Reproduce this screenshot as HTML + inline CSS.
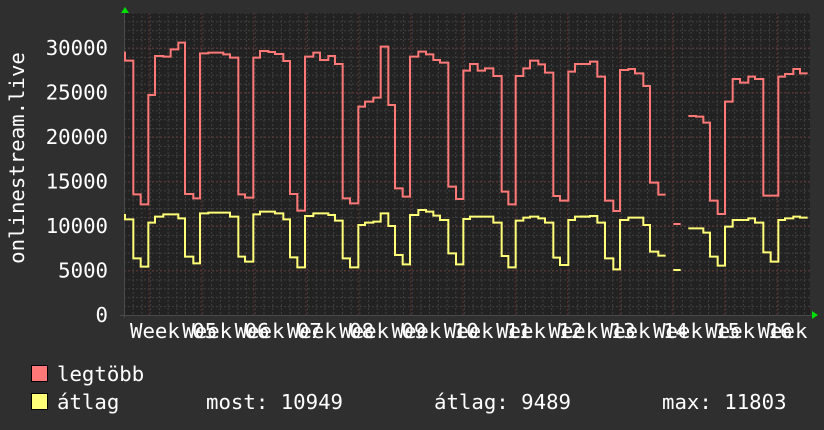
<!DOCTYPE html>
<html><head><meta charset="utf-8"><style>
html,body{margin:0;padding:0;background:#2f2f2f;}
svg{display:block;}
text{font-family:"DejaVu Sans Mono","Liberation Mono",monospace;fill:#fff;font-size:20.7px;}
</style></head><body>
<svg width="824" height="430" viewBox="0 0 824 430" xmlns="http://www.w3.org/2000/svg">
<rect width="824" height="430" fill="#2f2f2f"/>
<rect x="124" y="13" width="686" height="302" fill="#222222"/>
<defs>
<pattern id="vmin" x="124" y="0" width="8.717" height="430" patternUnits="userSpaceOnUse">
<line x1="0.5" y1="0" x2="0.5" y2="430" stroke="#404040" stroke-width="1" stroke-dasharray="2,2"/>
</pattern>
<pattern id="hmin" x="0" y="315" width="824" height="8.9" patternUnits="userSpaceOnUse">
<line x1="0" y1="0.5" x2="824" y2="0.5" stroke="#404040" stroke-width="1" stroke-dasharray="2,2"/>
</pattern>
</defs>
<rect x="124" y="13" width="686" height="302" fill="url(#vmin)"/>
<rect x="124" y="13" width="686" height="302" fill="url(#hmin)"/>
<g stroke="#5e3030" stroke-width="1" stroke-dasharray="2,2">
<line x1="149" y1="13" x2="149" y2="315"/><line x1="201.3" y1="13" x2="201.3" y2="315"/>
<line x1="253.7" y1="13" x2="253.7" y2="315"/><line x1="306" y1="13" x2="306" y2="315"/>
<line x1="358.3" y1="13" x2="358.3" y2="315"/><line x1="410.7" y1="13" x2="410.7" y2="315"/>
<line x1="463" y1="13" x2="463" y2="315"/><line x1="515.3" y1="13" x2="515.3" y2="315"/>
<line x1="567.7" y1="13" x2="567.7" y2="315"/><line x1="620" y1="13" x2="620" y2="315"/>
<line x1="672.3" y1="13" x2="672.3" y2="315"/><line x1="724.7" y1="13" x2="724.7" y2="315"/>
<line x1="777" y1="13" x2="777" y2="315"/>
<line x1="124" y1="270.5" x2="810" y2="270.5"/><line x1="124" y1="226" x2="810" y2="226"/>
<line x1="124" y1="181.5" x2="810" y2="181.5"/><line x1="124" y1="137" x2="810" y2="137"/>
<line x1="124" y1="92.5" x2="810" y2="92.5"/><line x1="124" y1="48" x2="810" y2="48"/>
</g>
<line x1="120" y1="315.5" x2="812" y2="315.5" stroke="#4a4a4a" stroke-width="1"/>
<line x1="124.5" y1="13" x2="124.5" y2="318" stroke="#4a4a4a" stroke-width="1"/>
<polygon points="812,311 818,315 812,319" fill="#00e000"/>
<polygon points="121,13 125,7 129,13" fill="#00e000"/>

<g fill="none" stroke-width="6" stroke-linejoin="miter">
<g transform="translate(120,30) scale(0.33333)">
<path stroke="#ff7878" d="M15 65 V92 H40 V493 H62 V523 H85 V195 H105 V78 H130 V80 H152 V58 H175 V38 H195 V492 H220 V505 H240 V70 H265 V68 H310 V73 H330 V83 H355 V493 H375 V503 H400 V83 H420 V63 H445 V66 H465 V72 H490 V93 H510 V492 H532 V542 H555 V80 H580 V68 H600 V90 H625 V78 H645 V102 H668 V505 H690 V520 H715 V230 H720"/>
<path stroke="#ffff78" d="M15 552 V568 H40 V685 H62 V710 H85 V578 H105 V560 H130 V553 H175 V565 H195 V680 H220 V700 H240 V550 H265 V548 H330 V560 H355 V680 H375 V695 H400 V553 H420 V545 H465 V550 H490 V568 H510 V682 H532 V712 H555 V558 H580 V550 H625 V555 H645 V572 H668 V685 H690 V712 H715 V585 H720"/>
</g>
<g transform="translate(350,30) scale(0.33333)">
<path stroke="#ff7878" d="M25 230 H45 V215 H70 V203 H92 V50 H115 V225 H135 V475 H158 V500 H180 V80 H205 V65 H228 V73 H250 V90 H270 V98 H295 V470 H318 V507 H340 V122 H360 V102 H383 V122 H405 V115 H430 V138 H455 V485 H475 V523 H497 V138 H520 V115 H540 V92 H565 V103 H585 V128 H610 V498 H630 V512 H655 V125 H675 V102 H720"/>
<path stroke="#ffff78" d="M25 585 H45 V578 H70 V575 H92 V550 H115 V588 H135 V675 H158 V703 H180 V555 H205 V540 H228 V545 H250 V557 H270 V570 H295 V670 H318 V703 H340 V567 H360 V560 H430 V578 H455 V678 H475 V712 H497 V572 H520 V563 H540 V560 H565 V565 H585 V578 H610 V683 H630 V705 H655 V570 H675 V560 H720"/>
</g>
<g transform="translate(580,30) scale(0.33333)">
<path stroke="#ff7878" d="M0 102 H30 V95 H52 V140 H75 V512 H100 V543 H120 V120 H145 V117 H165 V130 H190 V168 H210 V458 H235 V494 H257 M280 582 H302 M325 258 H348 V260 H370 V278 H390 V512 H413 V552 H435 V215 H458 V147 H480 V158 H505 V140 H525 V147 H550 V497 H595 V140 H615 V132 H640 V117 H660 V130 H683"/>
<path stroke="#ffff78" d="M0 560 H30 V558 H52 V578 H75 V685 H100 V718 H120 V570 H145 V563 H190 V585 H210 V665 H235 V677 H257 M280 720 H302 M325 595 H370 V608 H390 V680 H413 V707 H435 V590 H458 V570 H505 V565 H525 V578 H550 V667 H572 V695 H595 V570 H615 V565 H640 V560 H660 V563 H683"/>
</g>
</g>

<g text-anchor="end">
<text x="108" y="55">30000</text><text x="108" y="99.5">25000</text>
<text x="108" y="144">20000</text><text x="108" y="188.5">15000</text>
<text x="108" y="233">10000</text><text x="108" y="277.5">5000</text>
<text x="108" y="322">0</text>
</g>
<text transform="translate(24,158) rotate(-90)" text-anchor="middle">onlinestream.live</text>

<svg x="0" y="0" width="812" height="430" overflow="hidden">
<text x="130" y="338">Week 05</text><text x="182.3" y="338">Week 06</text>
<text x="234.6" y="338">Week 07</text><text x="286.9" y="338">Week 08</text>
<text x="339.2" y="338">Week 09</text><text x="391.5" y="338">Week 10</text>
<text x="443.8" y="338">Week 11</text><text x="496.1" y="338">Week 12</text>
<text x="548.4" y="338">Week 13</text><text x="600.7" y="338">Week 14</text>
<text x="653" y="338">Week 15</text><text x="705.3" y="338">Week 16</text>
<text x="757.6" y="338">Week 17</text>
</svg>

<rect x="31.5" y="365.5" width="16" height="16" fill="#ff7878" stroke="#000" stroke-width="1"/>
<rect x="31.5" y="393.5" width="16" height="16" fill="#ffff78" stroke="#000" stroke-width="1"/>
<text x="57" y="381">legtöbb</text>
<text x="57" y="409">átlag</text>
<text x="206" y="409">most: 10949</text>
<text x="434" y="409">átlag: 9489</text>
<text x="662" y="409">max: 11803</text>
</svg>
</body></html>
